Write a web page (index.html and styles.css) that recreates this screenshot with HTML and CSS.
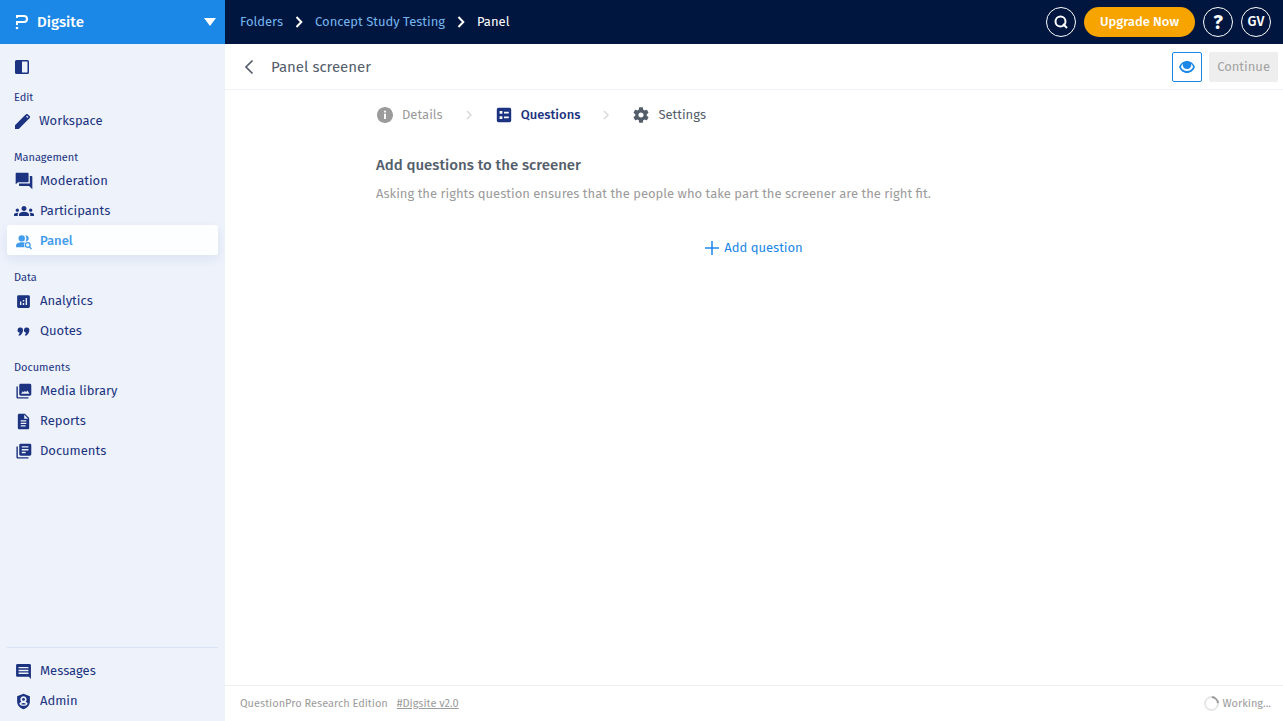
FILE: index.html
```html
<!DOCTYPE html>
<html lang="en">
<head>
<meta charset="utf-8">
<meta name="viewport" content="width=device-width, initial-scale=1">
<title>Panel screener</title>
<link rel="stylesheet" href="styles.css">
</head>
<body>
<div class="app">
  <aside class="sidebar">
    <button class="product" type="button">
      <svg class="product-logo" viewBox="0 0 14 16" aria-hidden="true"><path d="M3 4V2h7a3 3 0 0 1 0 6H3v3" fill="none" stroke="currentColor" stroke-width="2"/><path d="M1 4h4v3H1z" fill="#1b87e6"/><circle cx="3" cy="14" r="1.300" fill="currentColor"/></svg>
      <span class="product-name">Digsite</span>
      <svg class="product-caret" viewBox="0 0 12 8" aria-hidden="true"><path d="M0 0h12L6 8z"/></svg>
    </button>
    <button class="collapse" type="button" aria-label="Collapse sidebar">
      <svg viewBox="0 0 14 14" aria-hidden="true"><path fill-rule="evenodd" d="M1.500 0h11A1.500 1.500 0 0 1 14 1.500v11a1.500 1.500 0 0 1-1.500 1.500h-11A1.500 1.500 0 0 1 0 12.500v-11A1.500 1.500 0 0 1 1.500 0zM7 1.500v11h5.500v-11z"/></svg>
    </button>
    <nav class="nav">
      <section class="group">
        <h2 class="group-title">Edit</h2>
        <a class="item item-edit" href="#"><span class="item-icon"><svg viewBox="3 3 18 18" aria-hidden="true"><path d="M3 16.500V21h4.500L18.500 10 14 5.500zM20.500 8a1.800 1.800 0 0 0 0-2.500l-2-2a1.800 1.800 0 0 0-2.500 0L14 5.500l4.500 4.500z"/><path d="M16.800 5.500l1.700 1.700" stroke="#edf2fb" stroke-width="1.500"/></svg></span>Workspace</a>
      </section>
      <section class="group">
        <h2 class="group-title">Management</h2>
        <a class="item" href="#"><span class="item-icon"><svg class="wide" viewBox="0 0 24 24" aria-hidden="true"><path d="M21 6h-2v9H6v2c0 .550.450 1 1 1h11l4 4V7c0-.550-.450-1-1-1zm-3.500 6V3c0-.550-.450-1-1-1H3c-.550 0-1 .450-1 1v13l3-2.500h11.500c.550 0 1-.450 1-1z"/></svg></span>Moderation</a>
        <a class="item" href="#"><span class="item-icon"><svg class="wide" viewBox="0 0 24 24" aria-hidden="true"><path d="M12 12.750c1.630 0 3.070.390 4.240.900 1.080.480 1.760 1.560 1.760 2.730V18H6v-1.610c0-1.180.680-2.260 1.760-2.730 1.170-.520 2.610-.910 4.240-.910zM4 13c1.100 0 2-.900 2-2s-.900-2-2-2-2 .900-2 2 .900 2 2 2zm1.130 1.100c-.370-.060-.740-.100-1.130-.100-.990 0-1.930.210-2.780.580C.480 14.900 0 15.620 0 16.430V18h4.500v-1.610c0-.830.230-1.610.630-2.290zM20 13c1.100 0 2-.900 2-2s-.900-2-2-2-2 .900-2 2 .900 2 2 2zm4 3.430c0-.810-.480-1.530-1.220-1.850-.850-.370-1.790-.580-2.780-.580-.390 0-.760.040-1.130.100.400.680.630 1.460.630 2.290V18H24v-1.570zM12 6c1.660 0 3 1.340 3 3s-1.340 3-3 3-3-1.340-3-3 1.340-3 3-3z"/></svg></span>Participants</a>
        <a class="item item-active" href="#" aria-current="page"><span class="item-icon"><svg viewBox="0 0 24 24" aria-hidden="true"><circle cx="9.500" cy="7.500" r="4.500"/><path d="M1.500 20v-2.500c0-3 4.500-4.500 8-4.500 1.500 0 3 .200 4.200.700A6.500 6.500 0 0 0 13.500 20z"/><path d="M14.500 3c3 0 5 2 5 4.500S17.500 12 14.500 12c2-2.500 2-6.500 0-9z"/><circle cx="18" cy="17" r="3.300" fill="none" stroke="currentColor" stroke-width="1.800"/><path d="M20.300 19.300l3 3.200" fill="none" stroke="currentColor" stroke-width="2"/></svg></span>Panel</a>
      </section>
      <section class="group">
        <h2 class="group-title">Data</h2>
        <a class="item" href="#"><span class="item-icon"><svg viewBox="0 0 24 24" aria-hidden="true"><path fill-rule="evenodd" d="M5 3h14a2 2 0 0 1 2 2v14a2 2 0 0 1-2 2H5a2 2 0 0 1-2-2V5a2 2 0 0 1 2-2zM7 12v5h2v-5zM11 10v2h2v-2zM11 14v3h2v-3zM15 7v10h2V7z"/></svg></span>Analytics</a>
        <a class="item" href="#"><span class="item-icon"><svg viewBox="0 0 24 24" aria-hidden="true"><path d="M7.800 6.500a3.600 3.600 0 0 1 3.500 3.700c0 2.800-2 5.700-4 7.300H4.700l2-3.800a3.600 3.600 0 0 1 1.100-7.200zM16.800 6.500a3.600 3.600 0 0 1 3.500 3.700c0 2.800-2 5.700-4 7.300h-2.600l2-3.800a3.600 3.600 0 0 1 1.100-7.200z"/></svg></span>Quotes</a>
      </section>
      <section class="group">
        <h2 class="group-title">Documents</h2>
        <a class="item" href="#"><span class="item-icon"><svg viewBox="0 0 24 24" aria-hidden="true"><path fill-rule="evenodd" d="M8 1h13a2 2 0 0 1 2 2v13a2 2 0 0 1-2 2H8a2 2 0 0 1-2-2V3a2 2 0 0 1 2-2zM8.500 15h12l-3-4.500-2 2.500-1.500-2-1.500 2-1.500-1.500z"/><path d="M2 5v15c0 1.100.900 2 2 2h15v-2H4V5H2z"/></svg></span>Media library</a>
        <a class="item" href="#"><span class="item-icon"><svg viewBox="0 0 24 24" aria-hidden="true"><path d="M14 1H6c-1.100 0-2 .900-2 2v18c0 1.100.900 2 2 2h12c1.100 0 2-.900 2-2V7l-6-6zm1 18H8v-1.700h7V19zm1-3.500H8v-1.700h8v1.700zm0-3.500H8v-1.700h8V12zm-3-4V2.500L18.500 8H13z"/></svg></span>Reports</a>
        <a class="item" href="#"><span class="item-icon"><svg viewBox="0 0 24 24" aria-hidden="true"><path d="M4 5H2v15c0 1.100.900 2 2 2h15v-2H4V5zm17-4H8c-1.100 0-2 .900-2 2v13c0 1.100.900 2 2 2h13c1.100 0 2-.900 2-2V3c0-1.100-.900-2-2-2zm-2 9.500H9.500v-2H19v2zm-4 4H9.500v-2H15v2zm4-8H9.500v-2H19v2z"/></svg></span>Documents</a>
      </section>
    </nav>
    <nav class="nav nav-bottom" aria-label="Account">
      <a class="item" href="#"><span class="item-icon"><svg viewBox="0 0 24 24" aria-hidden="true"><path d="M22.500 3.500c0-1.100-.900-2-2-2h-17c-1.100 0-2 .900-2 2v14c0 1.100.900 2 2 2h16l3 3v-19zM19 15.500H5v-2h14v2zm0-4H5v-2h14v2zm0-4H5v-2h14v2z"/></svg></span>Messages</a>
      <a class="item" href="#"><span class="item-icon"><svg viewBox="0 0 24 24" aria-hidden="true"><path fill-rule="evenodd" d="M12 1l9 3.500V12c0 5-3.600 9.500-9 11-5.400-1.500-9-6-9-11V4.500zM12 4.500a4.500 4.500 0 0 0-3 7.800 6 6 0 0 0-3 2.700c1.300 2.200 3.300 3 6 3s4.700-.8 6-3a6 6 0 0 0-3-2.700 4.500 4.500 0 0 0-3-7.800z"/><circle cx="12" cy="9" r="2"/><path d="M8.500 15.500c2-2 5-2 7 0-2 1.200-5 1.200-7 0z"/></svg></span>Admin</a>
    </nav>
  </aside>

  <div class="page">
    <header class="topbar">
      <nav class="crumbs" aria-label="Breadcrumb">
        <a href="#">Folders</a>
        <svg viewBox="0 0 8 12" aria-hidden="true"><path d="M1.500 1l4.800 5-4.800 5"/></svg>
        <a href="#">Concept Study Testing</a>
        <svg viewBox="0 0 8 12" aria-hidden="true"><path d="M1.500 1l4.800 5-4.800 5"/></svg>
        <span class="crumb-current">Panel</span>
      </nav>
      <div class="top-actions">
        <button class="round" type="button" aria-label="Search"><svg viewBox="0 0 14 14" aria-hidden="true"><circle cx="6.500" cy="6.500" r="5" fill="none" stroke="currentColor" stroke-width="2"/><path d="M9 9l4 4" stroke="currentColor" stroke-width="2"/></svg></button>
        <button class="upgrade" type="button">Upgrade Now</button>
        <button class="round round-help" type="button">?</button>
        <button class="round" type="button">GV</button>
      </div>
    </header>

    <div class="titlebar">
      <button class="back" type="button" aria-label="Back"><svg viewBox="0 0 10 16" aria-hidden="true"><path d="M8.500 1.500L2 8l6.500 6.500" fill="none" stroke="currentColor" stroke-width="1.700"/></svg></button>
      <h1 class="title">Panel screener</h1>
      <button class="preview" type="button" aria-label="Preview"><svg viewBox="0 0 16 12" aria-hidden="true"><path fill-rule="evenodd" d="M8 0c3.500 0 6.500 2.300 8 6-1.500 3.700-4.500 6-8 6S1.500 9.700 0 6C1.500 2.300 4.500 0 8 0zM3.800 2.800A7.500 7.500 0 0 0 1.900 6c1.200 2.500 3.400 4 6.100 4s4.900-1.500 6.100-4a7.500 7.500 0 0 0-1.900-3.200 4.300 4.300 0 1 1-8.400 0z"/></svg></button>
      <button class="continue" type="button" disabled>Continue</button>
    </div>

    <main class="content">
      <div class="column">
        <nav class="steps" aria-label="Steps">
          <a class="step step-done" href="#"><svg viewBox="2 2 20 20" aria-hidden="true"><path d="M12 2C6.480 2 2 6.480 2 12s4.480 10 10 10 10-4.480 10-10S17.520 2 12 2zm1.200 15h-2.400v-6.500h2.400V17zm0-8h-2.400V6.700h2.400V9z"/></svg>Details</a>
          <svg class="step-arrow" viewBox="0 0 6 10" aria-hidden="true"><path d="M1 1l4 4-4 4"/></svg>
          <a class="step step-current" href="#" aria-current="step"><svg viewBox="2 2 20 20" aria-hidden="true"><path fill-rule="evenodd" d="M5 3h14a2 2 0 0 1 2 2v14a2 2 0 0 1-2 2H5a2 2 0 0 1-2-2V5a2 2 0 0 1 2-2zM6.500 7v3.500H10V7zM6.500 13.500V17H10v-3.500zM12 8v2h6V8zM12 14v2h6v-2z"/></svg>Questions</a>
          <svg class="step-arrow" viewBox="0 0 6 10" aria-hidden="true"><path d="M1 1l4 4-4 4"/></svg>
          <a class="step" href="#"><svg viewBox="2 2 20 20" aria-hidden="true"><path d="M19.140 12.940c.040-.300.060-.610.060-.940 0-.320-.020-.640-.070-.940l2.030-1.580c.180-.140.230-.410.120-.610l-1.920-3.320c-.120-.220-.370-.290-.590-.220l-2.390.960c-.500-.380-1.030-.700-1.620-.940l-.360-2.540c-.040-.240-.240-.410-.480-.410h-3.840c-.240 0-.430.170-.470.410l-.360 2.540c-.590.240-1.130.570-1.620.940l-2.390-.960c-.220-.080-.470 0-.590.220L2.740 8.870c-.120.210-.080.470.120.610l2.030 1.580c-.050.300-.090.630-.090.940s.020.640.070.940l-2.030 1.580c-.180.140-.230.410-.120.610l1.920 3.320c.120.220.370.290.590.220l2.390-.960c.500.380 1.030.700 1.620.940l.360 2.540c.050.240.240.410.480.410h3.840c.240 0 .440-.170.470-.410l.360-2.540c.590-.240 1.130-.560 1.620-.940l2.390.960c.220.080.470 0 .590-.220l1.920-3.320c.120-.220.070-.470-.120-.610l-2.010-1.580zM12 15.200c-1.760 0-3.200-1.440-3.200-3.200s1.440-3.200 3.200-3.200 3.200 1.440 3.200 3.200-1.440 3.200-3.200 3.200z"/></svg>Settings</a>
        </nav>
        <h2 class="heading">Add questions to the screener</h2>
        <p class="lead">Asking the rights question ensures that the people who take part the screener are the right fit.</p>
        <button class="add" type="button"><svg viewBox="0 0 14 14" aria-hidden="true"><path d="M7 0v14M0 7h14" stroke="currentColor" stroke-width="1.500"/></svg>Add question</button>
      </div>
    </main>

    <footer class="footer">
      <span>QuestionPro Research Edition</span>
      <a href="#">#Digsite v2.0</a>
      <span class="working" role="status"><span class="spinner"></span>Working...</span>
    </footer>
  </div>
</div>
</body>
</html>
```

FILE: styles.css
```css
* { box-sizing: border-box; }

body {
  margin: 0;
  font-family: "Fira Sans", "Noto Sans", sans-serif;
  font-size: 13px;
  line-height: 20px;
  color: #545e6b;
  background: #fff;
}

button {
  font: inherit;
  color: inherit;
  background: none;
  border: 0;
  padding: 0;
  cursor: pointer;
}

a { color: inherit; text-decoration: none; }
h1, h2, p { margin: 0; font-weight: 400; }
svg { display: block; flex: none; fill: currentColor; }

.app {
  display: grid;
  grid-template-columns: 225px 1fr;
  min-height: 100vh;
}

/* Sidebar */
.sidebar {
  display: flex;
  flex-direction: column;
  background: #edf2fb;
  color: #1b3380;
}

.product {
  display: flex;
  align-items: center;
  height: 44px;
  padding: 0 9px 0 14px;
  background: #1b87e6;
  color: #fff;
  text-align: left;
}

.product-logo { width: 14px; height: 16px; }
.product-name { flex: 1; margin-left: 9px; font-size: 15px; font-weight: 500; }
.product-caret { width: 12px; height: 8px; }

.collapse {
  align-self: flex-start;
  height: 46px;
  padding: 0 15px;
}
.collapse svg { width: 14px; height: 14px; }

.nav { display: flex; flex-direction: column; gap: 15px; padding: 0 7px; }

.group-title {
  padding-left: 7px;
  font-size: 11px;
  line-height: 15px;
}

.item {
  display: flex;
  align-items: center;
  gap: 7px;
  height: 30px;
  padding: 2px 0 0 7px;
  border-radius: 2px;
}

.item-icon { display: flex; justify-content: center; width: 19px; }
.item-icon svg { width: 17px; height: 17px; }
.item-icon svg.wide { width: 20px; height: 20px; }
.item-edit { gap: 9px; }
.item-edit .item-icon { width: 16px; }
.item-edit svg { width: 15px; height: 15px; }

.item-active {
  background: #fdfeff;
  color: #439ceb;
  font-weight: 500;
  box-shadow: 0 4px 12px rgba(27, 51, 128, 0.08);
}

.nav-bottom {
  gap: 0;
  margin: auto 7px 0;
  padding: 7px 0 6px;
  border-top: 1px solid #dae3f3;
}
.nav-bottom .item { padding-left: 7px; }

/* Top bar */
.page { display: flex; flex-direction: column; min-width: 0; }

.topbar {
  display: flex;
  align-items: center;
  justify-content: space-between;
  height: 44px;
  padding: 0 12px 0 15px;
  background: #00163f;
  color: #fff;
}

.crumbs { display: flex; align-items: center; gap: 12px; color: #75b5ef; }
.crumbs svg { width: 8px; height: 12px; fill: none; stroke: #fff; stroke-width: 2; }
.crumb-current { color: #fff; }

.top-actions { display: flex; gap: 8px; }

.round {
  display: flex;
  align-items: center;
  justify-content: center;
  width: 30px;
  height: 30px;
  border: 1px solid #fff;
  border-radius: 50%;
  font-size: 14px;
  font-weight: 500;
}
.round svg { width: 14px; height: 14px; }
.round-help { font-size: 20px; font-weight: 700; }

.upgrade {
  height: 30px;
  padding: 0 16px;
  border-radius: 15px;
  background: #f7a400;
  font-weight: 500;
}

/* Title bar */
.titlebar {
  display: flex;
  align-items: center;
  height: 46px;
  padding: 1px 5px 0 19px;
  border-bottom: 1px solid #f2f3f8;
}

.back svg { width: 10px; height: 16px; }
.title { flex: 1; margin-left: 17px; font-size: 15px; }

.preview {
  display: flex;
  align-items: center;
  justify-content: center;
  width: 30px;
  height: 30px;
  border: 1px solid #1b87e6;
  border-radius: 2px;
  color: #1b87e6;
}
.preview svg { width: 16px; height: 12px; }

.continue {
  height: 30px;
  margin-left: 7px;
  padding: 0 8px;
  border-radius: 2px;
  background: #eee;
  color: #a3a3a3;
}

/* Content */
.content { flex: 1; padding: 0 16px; }
.column { display: flex; flex-direction: column; max-width: 756px; margin: 0 auto; }

.steps { display: flex; align-items: center; height: 50px; }
.step { display: flex; align-items: center; gap: 9px; padding-left: 1px; }
.step svg { width: 16px; height: 16px; }
.step-done { color: #9b9b9b; }
.step-current { color: #1b3380; font-weight: 500; }
.step-arrow { width: 6px; height: 10px; margin: 0 23px; fill: none; stroke: #d8d8d8; stroke-width: 1.5px; }

.heading { margin-top: 15px; font-size: 15px; font-weight: 500; }
.lead { margin-top: 9px; color: #9b9b9b; }

.add {
  display: flex;
  align-items: center;
  align-self: center;
  gap: 5px;
  margin-top: 34px;
  color: #1b87e6;
}
.add svg { width: 14px; height: 14px; }

/* Footer */
.footer {
  display: flex;
  align-items: center;
  gap: 9px;
  height: 36px;
  padding: 0 12px 0 15px;
  border-top: 1px solid #eee;
  font-size: 11px;
  color: #9b9b9b;
}
.footer a { text-decoration: underline; }

.working { display: flex; align-items: center; gap: 4px; margin-left: auto; }
.spinner {
  width: 15px;
  height: 15px;
  border: 2px solid #e6e6e6;
  border-top-color: #9b9b9b;
  border-radius: 50%;
  transform: rotate(45deg);
}
```
